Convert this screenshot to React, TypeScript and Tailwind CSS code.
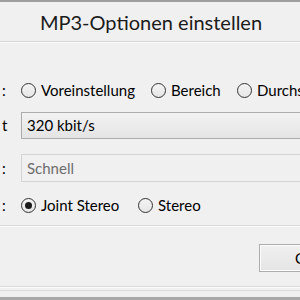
import React from "react";

function Radio({ checked }: { checked?: boolean }) {
  return (
    <span className="w-[15px] h-[15px] shrink-0 rounded-full border border-[#333333] bg-gradient-to-b from-[#f4f4f4] to-[#e6e6e6] flex items-center justify-center">
      {checked ? <span className="w-[7px] h-[7px] rounded-full bg-[#1a1a1a]" /> : null}
    </span>
  );
}

function Option({ label, checked, w }: { label: string; checked?: boolean; w: string }) {
  return (
    <div className={`flex items-center gap-[5px] shrink-0 ${w}`}>
      <Radio checked={checked} />
      <span className="whitespace-nowrap">{label}</span>
    </div>
  );
}

function Label({ text }: { text: string }) {
  return (
    <div className="w-[21px] shrink-0 pl-[2px] whitespace-nowrap">
      <span>{text}</span>
    </div>
  );
}

export default function App() {
  return (
    <div
      className="w-[300px] h-[300px] overflow-hidden bg-[#f0f0f0] flex flex-col text-[15px] text-black"
      style={{ fontFamily: 'Lato, "Noto Sans", sans-serif' }}
    >
      <div className="h-[2px] bg-[#9d9d9d] shrink-0" />
      <div className="h-[39px] shrink-0 flex items-center justify-center text-[20px] text-[#1b1b1b] pl-[2px]">
        MP3-Optionen einstellen
      </div>
      <div className="h-px bg-[#d6d6d6] shrink-0" />
      <div className="h-px bg-[#fafafa] shrink-0" />

      <div className="mt-[37px] h-[20px] flex items-center shrink-0">
        <Label text=":" />
        <Option label="Voreinstellung" w="w-[130px]" />
        <Option label="Bereich" w="w-[86px]" />
        <Option label="Durchschnitt" w="w-[120px]" />
      </div>

      <div className="mt-[12px] h-[27px] flex items-center shrink-0">
        <Label text="t" />
        <div className="flex-1 h-[27px] border border-r-0 border-[#acacac] bg-gradient-to-b from-[#f2f2f2] to-[#e4e4e4] flex items-center pl-[5px]">
          320 kbit/s
        </div>
      </div>

      <div className="mt-[15px] h-[28px] flex items-center shrink-0">
        <Label text=":" />
        <div className="flex-1 h-[28px] border border-r-0 border-[#d4d4d4] bg-[#f0f0f0] flex items-center pl-[5px] text-[#6d6d6d]">
          Schnell
        </div>
      </div>

      <div className="mt-[13px] h-[20px] flex items-center shrink-0">
        <Label text=":" />
        <Option label="Joint Stereo" checked w="w-[117px]" />
        <Option label="Stereo" w="w-[80px]" />
      </div>

      <div className="mt-[10px] h-px bg-[#dadada] shrink-0" />
      <div className="h-px bg-[#fbfbfb] shrink-0" />

      <div className="mt-[17px] h-[28px] flex shrink-0">
        <div className="ml-[259px] w-[94px] h-[28px] shrink-0 border border-[#adadad] bg-gradient-to-b from-[#f0f0f0] to-[#e5e5e5] flex items-center justify-center">
          <div className="w-full h-full border border-[#fcfcfc] flex items-center justify-center">
            OK
          </div>
        </div>
      </div>

      <div className="mt-[14px] h-px bg-[#dcdcdc] shrink-0" />
      <div className="h-px bg-[#fafafa] shrink-0" />
      <div className="mt-[2px] h-px bg-[#dcdcdc] shrink-0" />
      <div className="flex-1" />
      <div className="h-[3px] bg-[#a8a8a8] shrink-0" />
    </div>
  );
}
